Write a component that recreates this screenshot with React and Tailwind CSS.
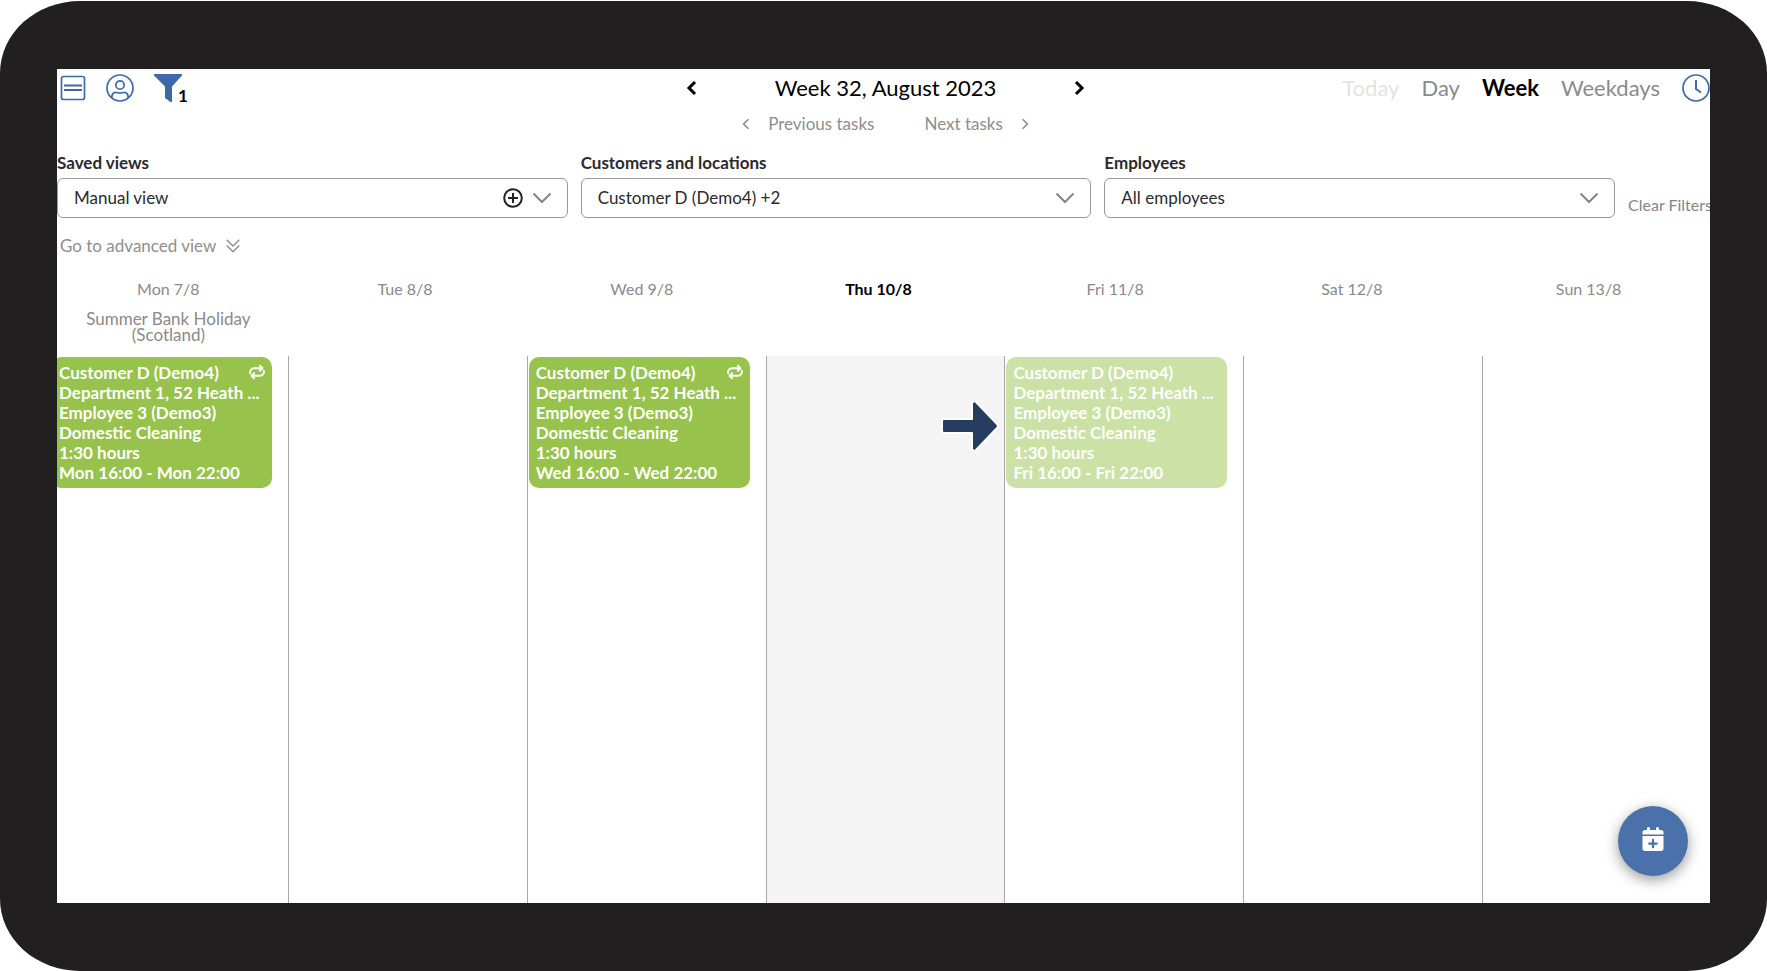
import React from 'react';
import { FaCalendarPlus } from 'react-icons/fa6';

const DAYS = [
  { label: 'Mon 7/8', holiday: 'Summer Bank Holiday (Scotland)', task: { time: 'Mon 16:00 - Mon 22:00', repeat: true } },
  { label: 'Tue 8/8' },
  { label: 'Wed 9/8', task: { time: 'Wed 16:00 - Wed 22:00', repeat: true } },
  { label: 'Thu 10/8', today: true },
  { label: 'Fri 11/8', task: { time: 'Fri 16:00 - Fri 22:00', faded: true } },
  { label: 'Sat 12/8' },
  { label: 'Sun 13/8' },
];

const Chevron = ({ className, d, strokeWidth = 2 }) => (
  <svg viewBox="0 0 20 20" className={className} fill="none" stroke="currentColor" strokeWidth={strokeWidth}>
    <path d={d} />
  </svg>
);

const LEFT = 'M13 4 7 10l6 6';
const RIGHT = 'M7 4l6 6-6 6';

const ListIcon = () => (
  <svg viewBox="0 0 26 26" className="size-[26px]" fill="none" stroke="currentColor" strokeWidth="1.7">
    <rect x="1.500" y="1.500" width="23" height="23" rx="2" />
    <path d="M4 10.500h18M4 15h18" strokeWidth="2" />
  </svg>
);

const UserIcon = () => (
  <svg viewBox="0 0 28 28" className="size-7" fill="none" stroke="currentColor" strokeWidth="1.7">
    <circle cx="14" cy="14" r="13" />
    <circle cx="14" cy="11" r="4.200" />
    <path d="M5.800 23.800c0-3.800 1.600-5.400 4-5.400 1.600 0 2.400.8 4.200.8s2.600-.8 4.200-.8c2.400 0 4 1.600 4 5.400" />
  </svg>
);

const FilterIcon = () => (
  <svg viewBox="0 0 28 28" className="size-7" fill="currentColor">
    <path d="M0 0h28v1.500L18 12.500V28h-1.500L11 24V12.500L0 1.500z" />
  </svg>
);

const ClockIcon = () => (
  <svg viewBox="0 0 28 28" className="size-7" fill="none" stroke="currentColor" strokeWidth="1.700">
    <circle cx="14" cy="14" r="13" />
    <path d="M14 6v9l5 3.500" strokeWidth="2" />
  </svg>
);

const RepeatIcon = () => (
  <svg viewBox="0 0 16 16" className="mt-px -ml-4 size-4 shrink-0" fill="none" stroke="currentColor" strokeWidth="1.900" strokeLinecap="round" strokeLinejoin="round">
    <path d="M1.200 9.300C.6 6.200 2.600 4.200 5.200 4.200h7.600M10.800 1.600l2.700 2.600-2.700 2.600" />
    <path d="M14.800 6.700c.6 3.100-1.400 5.100-4 5.100H3.200M5.200 9.200l-2.700 2.600 2.700 2.600" />
  </svg>
);

const FilterSelect = ({ id, label, value, onAdd }) => (
  <div className="min-w-0 flex-1">
    <label htmlFor={id} className="block leading-5 font-bold text-[#2b2b2b]">{label}</label>
    <div className="mt-[5px] flex h-10 items-center rounded-md border border-[#999999] pr-[15px]">
      <select id={id} className="h-full min-w-0 flex-1 appearance-none bg-transparent pl-4 text-[#2b2b2b]">
        <option>{value}</option>
      </select>
      {onAdd && (
        <button type="button" aria-label="Add view" className="mr-[9px] text-[#222]">
          <svg viewBox="0 0 20 20" className="size-5" fill="none" stroke="currentColor" strokeWidth="2">
            <circle cx="10" cy="10" r="8.800" />
            <path d="M10 5v10M5 10h10" />
          </svg>
        </button>
      )}
      <Chevron className="size-5 shrink-0 text-[#858585]" d="M1.500 5.500 10 14l8.500-8.500" />
    </div>
  </div>
);

const TaskCard = ({ task }) => (
  <div className={`mt-px mr-4 ml-px flex rounded-[10px] pt-[6px] pr-[7px] pb-[5px] pl-[7px] leading-5 font-bold text-white ${task.faded ? 'bg-[#cbe1a5]' : 'bg-[#97c24b]'}`}>
    <div className="min-w-0 flex-1">
      <p>Customer D (Demo4)</p>
      <p className="whitespace-nowrap">Department 1, 52 Heath ...</p>
      <p>Employee 3 (Demo3)</p>
      <p>Domestic Cleaning</p>
      <p>1:30 hours</p>
      <p>{task.time}</p>
    </div>
    {task.repeat && <RepeatIcon />}
  </div>
);

const App = () => (
  <div className="bg-white pt-px font-['Lato','Open_Sans',sans-serif] text-[17px]">
    <div className="flex min-h-[calc(100vh-1px)] flex-col rounded-[80px/72px] bg-[#221f20] px-[57px] pt-[68px] pb-[68px]">
      <main className="relative flex flex-1 flex-col overflow-hidden bg-white">
        <header className="grid grid-cols-[1fr_auto_1fr] items-center pt-[3px] leading-8">
          <div className="flex items-center gap-[20px] pl-[3px] text-[#3e68a8]">
            <button type="button" aria-label="List"><ListIcon /></button>
            <button type="button" aria-label="Profile"><UserIcon /></button>
            <button type="button" className="flex items-end" aria-label="Filters, 1 active">
              <FilterIcon />
              <span className="-mb-1 -ml-1 leading-5 font-bold text-black">1</span>
            </button>
          </div>
          <div className="ml-1 flex w-[408px] items-center justify-between text-black">
            <button type="button" aria-label="Previous week"><Chevron className="size-5" d={LEFT} strokeWidth={3} /></button>
            <h1 className="text-[22px]">Week 32, August 2023</h1>
            <button type="button" aria-label="Next week"><Chevron className="size-5" d={RIGHT} strokeWidth={3} /></button>
          </div>
          <nav className="flex items-center justify-end gap-[22px] text-[22px] text-[#8a8a8a]">
            <button type="button" className="text-[#e3e3e3]">Today</button>
            <button type="button">Day</button>
            <button type="button" className="font-bold text-black">Week</button>
            <button type="button">Weekdays</button>
            <button type="button" aria-label="Time" className="text-[#3e68a8]"><ClockIcon /></button>
          </nav>
        </header>

        <div className="mt-2 flex items-center justify-center gap-[50px] pl-1 leading-6 text-[#8e8e8e]">
          <button type="button" className="flex items-center gap-[14px]">
            <Chevron className="size-4" d={LEFT} />Previous tasks
          </button>
          <button type="button" className="flex items-center gap-[14px]">
            Next tasks<Chevron className="size-4" d={RIGHT} />
          </button>
        </div>

        <section className="mt-[17px] -mr-2 flex items-end gap-[13px]">
          <FilterSelect id="views" label="Saved views" value="Manual view" onAdd />
          <FilterSelect id="customers" label="Customers and locations" value="Customer D (Demo4) +2" />
          <FilterSelect id="employees" label="Employees" value="All employees" />
          <button type="button" className="mb-px w-[90px] text-left text-base leading-6 whitespace-nowrap text-[#858585]">Clear Filters</button>
        </section>

        <button type="button" className="mt-4 ml-[3px] flex items-center gap-2 self-start leading-6 text-[#8e8e8e]">
          Go to advanced view
          <Chevron className="size-[18px]" d="M3 3l7 7 7-7M3 9.500l7 7 7-7" strokeWidth={1.600} />
        </button>

        <div className="mt-[19px] mr-[3px] -ml-[7px] grid h-[79px] grid-cols-7 text-center text-[#8a8a8a]">
          {DAYS.map(day => (
            <div key={day.label}>
              <h2 className={`text-base leading-6 ${day.today ? 'font-bold text-black' : ''}`}>{day.label}</h2>
              {day.holiday && <p className="mx-6 mt-[10px] leading-4">{day.holiday}</p>}
            </div>
          ))}
        </div>

        <div className="-mr-[11px] -ml-2 grid flex-1 grid-cols-7">
          {DAYS.map((day, index) => (
            <div key={day.label} className={`relative border-l border-[#a8a8a8] ${index === 0 ? 'pl-px' : ''} ${day.today ? 'bg-[#f4f4f4]' : ''}`}>
              {day.task && <TaskCard task={day.task} />}
              {day.today && (
                <svg viewBox="0 0 58 52" className="absolute top-[44px] right-[5px] h-[52px] w-[58px]" fill="#263d60" stroke="#fff" strokeWidth="2" strokeLinejoin="round">
                  <path d="M3 19h28V3q1.500-3 4-1l21 22q2 2 0 4L35 50q-2.500 2-4-1V33H3q-2 0-2-2V21q0-2 2-2z" />
                </svg>
              )}
            </div>
          ))}
        </div>

        <button type="button" aria-label="Add task" className="absolute right-[22px] bottom-[27px] flex size-[70px] items-center justify-center rounded-full bg-[#4a71a9] pb-1 text-white shadow-[0_4px_14px_rgba(0,0,0,0.4)]">
          <FaCalendarPlus size={24} />
        </button>
      </main>
    </div>
  </div>
);

export default App;
